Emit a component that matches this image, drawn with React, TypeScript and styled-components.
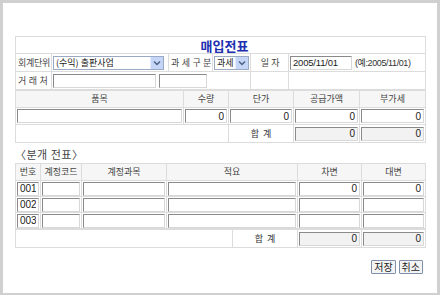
import React from 'react'
import styled, { createGlobalStyle } from 'styled-components'

const GlobalStyle = createGlobalStyle`
  html, body {
    margin: 0;
    padding: 0;
    background: #ffffff;
  }
  body {
    font-family: "Noto Sans CJK KR", "Liberation Sans", sans-serif;
    color: #333333;
  }
`

const Frame = styled.div`
  box-sizing: border-box;
  width: 440px;
  height: 295px;
  border-style: solid;
  border-color: #d0d0d0;
  border-width: 3px 3px 2px 3px;
  padding: 33px 12px 0 12px;
  background: #ffffff;
`

const Table = styled.table<{ $noTop?: boolean }>`
  width: 410px;
  border-collapse: collapse;
  table-layout: fixed;
  border: 1px solid #dcdcdc;
  ${(p) => (p.$noTop ? 'border-top: none;' : '')}
`

const Row = styled.tr<{ $h?: number }>`
  height: ${(p) => p.$h ?? 17}px;
`

const Cell = styled.td<{ $align?: string; $bg?: string }>`
  box-sizing: border-box;
  border: 1px solid #dcdcdc;
  padding: 0 1px;
  font-size: 9px;
  line-height: 12px;
  text-align: ${(p) => p.$align ?? 'left'};
  background: ${(p) => p.$bg ?? '#ffffff'};
  vertical-align: middle;
  white-space: nowrap;
  overflow: hidden;
`

const HeadCell = styled(Cell)`
  text-align: center;
  background: #f6f6f6;
  color: #444444;
`

const LabelCell = styled(Cell)`
  padding-left: 2px;
  color: #444444;
  letter-spacing: -0.3px;
  word-spacing: 1px;
`

const TitleCell = styled.td`
  height: 16px;
  border: 1px solid #dcdcdc;
  text-align: center;
  font-size: 13px;
  font-weight: 700;
  color: #2030b0;
  padding: 0 0 0 8px;
  line-height: 15px;
`

const TextInput = styled.input<{ $gray?: boolean; $w?: number }>`
  box-sizing: border-box;
  display: block;
  width: ${(p) => (p.$w ? `${p.$w}px` : '100%')};
  height: 14px;
  margin: 0;
  padding: 0 2px;
  border: 1px solid;
  border-color: #8a8a8a #d8d8d8 #d8d8d8 #8a8a8a;
  background: ${(p) => (p.$gray ? '#f2f2f2' : '#ffffff')};
  font-family: "Liberation Sans", sans-serif;
  font-size: 10px;
  color: #222222;
  text-align: left;
  outline: none;
`

const NumInput = styled(TextInput)`
  text-align: right;
`

const DateInput = styled(TextInput)`
  font-size: 9.5px;
  letter-spacing: -0.2px;
`

const InlineRow = styled.div`
  display: flex;
  align-items: center;
  gap: 3px;
`

const SelectBox = styled.div<{ $w: number }>`
  box-sizing: border-box;
  width: ${(p) => p.$w}px;
  height: 14px;
  display: flex;
  align-items: center;
  border: 1px solid #9aaac4;
  background: #ffffff;
  font-size: 9px;
  color: #222222;
`

const SelectText = styled.span`
  flex: 1;
  padding-left: 2px;
  line-height: 12px;
  overflow: hidden;
  white-space: nowrap;
`

const ArrowBtn = styled.span`
  width: 12px;
  height: 12px;
  flex: none;
  display: flex;
  align-items: center;
  justify-content: center;
  background: #c6d6f8;
  border-left: 1px solid #e4ecfc;
`

const HintText = styled.span`
  font-size: 9px;
  color: #333333;
  letter-spacing: -0.4px;
  font-family: "Liberation Sans", "Noto Sans CJK KR", sans-serif;
`

const Caption = styled.div`
  margin: 5px 0 2px 0;
  font-size: 11px;
  line-height: 13px;
  color: #444444;
  letter-spacing: 0.5px;
`

const ButtonBar = styled.div`
  display: flex;
  justify-content: flex-end;
  gap: 3px;
  margin: 12px 2px 0 0;
`

const SmallButton = styled.button`
  box-sizing: border-box;
  height: 14px;
  padding: 0 2px;
  border: 1px solid #7f8fa8;
  border-radius: 1px;
  background: #f4f4f4;
  font-family: "Noto Sans CJK KR", sans-serif;
  font-size: 10px;
  line-height: 12px;
  color: #222222;
`

const Chevron = () => (
  <svg width="8" height="6" viewBox="0 0 8 6">
    <path d="M1 1.5 L4 4.5 L7 1.5" fill="none" stroke="#4d6185" strokeWidth="1.5" />
  </svg>
)

const Select: React.FC<{ w: number; value: string }> = ({ w, value }) => (
  <SelectBox $w={w}>
    <SelectText>{value}</SelectText>
    <ArrowBtn>
      <Chevron />
    </ArrowBtn>
  </SelectBox>
)

const entryRows = [
  { no: '001', debit: '0', credit: '0' },
  { no: '002', debit: '', credit: '' },
  { no: '003', debit: '', credit: '' },
]

export default function App() {
  return (
    <>
      <GlobalStyle />
      <Frame>
        {/* 헤더 */}
        <Table>
          <colgroup>
            <col style={{ width: 36 }} />
            <col style={{ width: 117 }} />
            <col style={{ width: 44 }} />
            <col style={{ width: 38 }} />
            <col style={{ width: 38 }} />
            <col style={{ width: 137 }} />
          </colgroup>
          <tbody>
            <tr>
              <TitleCell colSpan={6}>매입전표</TitleCell>
            </tr>
            <Row $h={18}>
              <LabelCell>회계단위</LabelCell>
              <Cell>
                <Select w={111} value="(수익) 출판사업" />
              </Cell>
              <LabelCell $align="center">과 세 구 분</LabelCell>
              <Cell>
                <Select w={35} value="과세" />
              </Cell>
              <LabelCell $align="center">일 자</LabelCell>
              <Cell>
                <InlineRow>
                  <DateInput $w={62} defaultValue="2005/11/01" />
                  <HintText>(예:2005/11/01)</HintText>
                </InlineRow>
              </Cell>
            </Row>
            <Row $h={18}>
              <LabelCell>거 래 처</LabelCell>
              <Cell colSpan={3}>
                <InlineRow>
                  <TextInput $w={103} />
                  <TextInput $w={48} />
                </InlineRow>
              </Cell>
              <Cell />
              <Cell />
            </Row>
          </tbody>
        </Table>

        {/* 품목 */}
        <Table $noTop>
          <colgroup>
            <col style={{ width: 168 }} />
            <col style={{ width: 45 }} />
            <col style={{ width: 65 }} />
            <col style={{ width: 66 }} />
            <col style={{ width: 66 }} />
          </colgroup>
          <tbody>
            <Row>
              <HeadCell>품목</HeadCell>
              <HeadCell>수량</HeadCell>
              <HeadCell>단가</HeadCell>
              <HeadCell>공급가액</HeadCell>
              <HeadCell>부가세</HeadCell>
            </Row>
            <Row>
              <Cell><TextInput /></Cell>
              <Cell><NumInput defaultValue="0" /></Cell>
              <Cell><NumInput defaultValue="0" /></Cell>
              <Cell><NumInput defaultValue="0" /></Cell>
              <Cell><NumInput defaultValue="0" /></Cell>
            </Row>
            <Row $h={18}>
              <Cell colSpan={2} />
              <Cell $align="center">합 &nbsp;계</Cell>
              <Cell><NumInput $gray defaultValue="0" /></Cell>
              <Cell><NumInput $gray defaultValue="0" /></Cell>
            </Row>
          </tbody>
        </Table>

        <Caption>〈분개 전표〉</Caption>

        {/* 분개 */}
        <Table>
          <colgroup>
            <col style={{ width: 25 }} />
            <col style={{ width: 41 }} />
            <col style={{ width: 85 }} />
            <col style={{ width: 131 }} />
            <col style={{ width: 64 }} />
            <col style={{ width: 64 }} />
          </colgroup>
          <tbody>
            <Row>
              <HeadCell>번호</HeadCell>
              <HeadCell>계정코드</HeadCell>
              <HeadCell>계정과목</HeadCell>
              <HeadCell>적요</HeadCell>
              <HeadCell>차변</HeadCell>
              <HeadCell>대변</HeadCell>
            </Row>
            {entryRows.map((r) => (
              <Row key={r.no} $h={16}>
                <Cell><TextInput defaultValue={r.no} /></Cell>
                <Cell><TextInput /></Cell>
                <Cell><TextInput /></Cell>
                <Cell><TextInput /></Cell>
                <Cell><NumInput defaultValue={r.debit} /></Cell>
                <Cell><NumInput defaultValue={r.credit} /></Cell>
              </Row>
            ))}
          </tbody>
        </Table>
        <Table $noTop>
          <colgroup>
            <col style={{ width: 217 }} />
            <col style={{ width: 65 }} />
            <col style={{ width: 64 }} />
            <col style={{ width: 64 }} />
          </colgroup>
          <tbody>
            <Row $h={18}>
              <Cell />
              <Cell $align="center">합 &nbsp;계</Cell>
              <Cell><NumInput $gray defaultValue="0" /></Cell>
              <Cell><NumInput $gray defaultValue="0" /></Cell>
            </Row>
          </tbody>
        </Table>

        <ButtonBar>
          <SmallButton>저장</SmallButton>
          <SmallButton>취소</SmallButton>
        </ButtonBar>
      </Frame>
    </>
  )
}
